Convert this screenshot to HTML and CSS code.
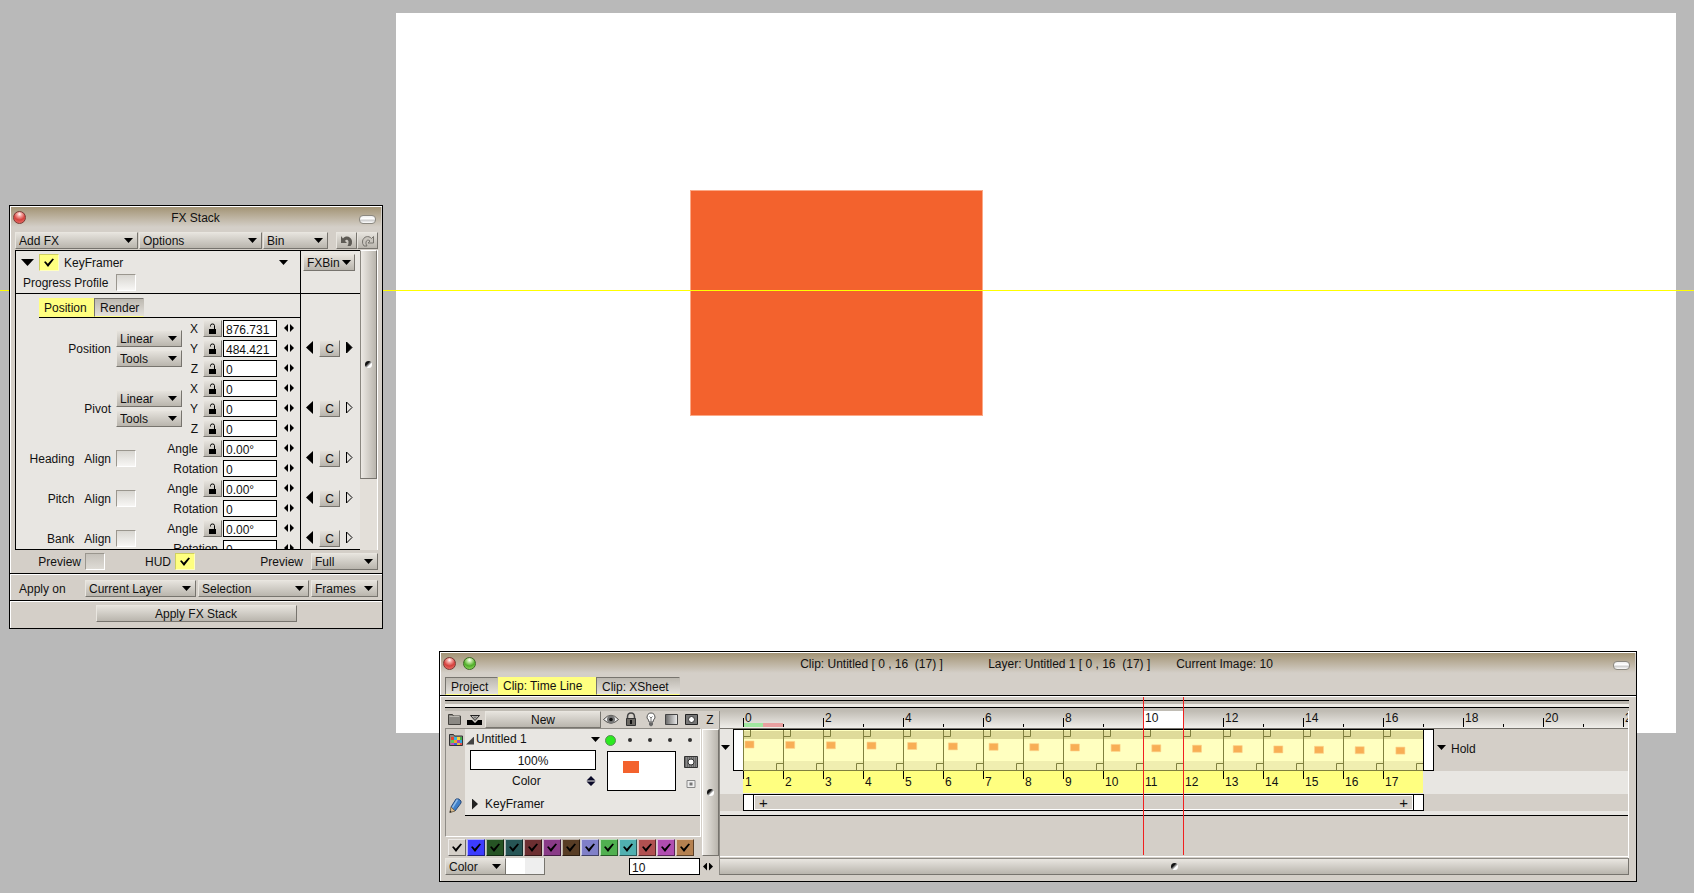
FILE: index.html
```html
<!DOCTYPE html>
<html lang="en">
<head>
<meta charset="utf-8">
<title>Animation workspace</title>
<link rel="stylesheet" href="styles.css">
</head>
<body>
<main class="desktop">
  <div class="sheet"></div>
  <div class="shape"></div>
  <div class="guide"></div>

  <section class="window fx" aria-label="FX Stack">
    <header class="titlebar">
      <button class="orb red" aria-label="Close"></button>
      <h1 class="title">FX Stack</h1>
      <button class="pill" aria-label="Collapse"></button>
    </header>
    <div class="toolbar">
      <span class="drop grow"><select aria-label="Add FX"><option>Add FX</option></select></span>
      <span class="drop grow"><select aria-label="Options"><option>Options</option></select></span>
      <span class="drop bin"><select aria-label="Bin"><option>Bin</option></select></span>
      <span class="history">
        <button class="btn" aria-label="Undo"><svg width="14" height="12" viewBox="0 0 14 12"><path d="M1 1v7h6L5 6C6 4 8 4.500 8.500 6.500Q8.800 9 7.500 11h3Q12.500 9 12 6C11 1.500 6 0 3 3.500z" fill="#5e5b55"/></svg></button>
        <button class="btn" aria-label="Redo"><svg width="14" height="12" viewBox="0 0 14 12"><path d="M12.500 1.500v6.500H7l2-2C7.500 4.500 5.500 5 5 7q-.5 2 1 4H3Q1 8.500 1.500 6C2.500 1.500 7.500 0 10.500 3.500z" fill="#c9c5be" stroke="#77746e"/></svg></button>
      </span>
    </div>

    <div class="stack">
      <div class="stack-main">
        <div class="fx-head">
          <div class="line">
            <button class="arrow big" aria-label="Fold KeyFramer"></button>
            <input type="checkbox" class="tick" id="kf" checked>
            <label for="kf" class="kf-name">KeyFramer</label>
            <button class="arrow" aria-label="KeyFramer menu"></button>
          </div>
          <div class="line">
            <label for="pp" class="pp">Progress Profile</label>
            <input type="checkbox" class="tick" id="pp">
          </div>
        </div>
        <div class="tabs inner-tabs">
          <button class="tab on">Position</button><button class="tab">Render</button>
        </div>
        <div id="params"></div>
      </div>
      <div class="stack-nav">
        <div class="nav-head"><span class="drop fxbin"><select aria-label="FXBin"><option>FXBin</option></select></span></div>
        <div id="navs"></div>
      </div>
      <div class="vscroll"><div class="thumb"><i class="dot"></i></div></div>
    </div>

    <div class="foot preview-row">
      <label for="pv">Preview</label><input type="checkbox" class="tick" id="pv">
      <label for="hud" class="hud">HUD</label><input type="checkbox" class="tick" id="hud" checked>
      <label for="full" class="quality">Preview</label>
      <span class="drop w67"><select id="full"><option>Full</option></select></span>
    </div>
    <div class="foot apply-row">
      <label for="layer" class="apply-label">Apply on</label>
      <span class="drop grow"><select id="layer"><option>Current Layer</option></select></span>
      <span class="drop grow"><select aria-label="Range"><option>Selection</option></select></span>
      <span class="drop w67"><select aria-label="Unit"><option>Frames</option></select></span>
    </div>
    <div class="foot last"><button class="btn text apply">Apply FX Stack</button></div>
  </section>

  <section class="window timeline" aria-label="Timeline">
    <header class="titlebar">
      <button class="orb red" aria-label="Close"></button>
      <button class="orb green" aria-label="Zoom"></button>
      <h2 class="title"><span class="t-part">Clip: Untitled [ 0 , 16&nbsp; (17) ]</span><span class="t-part">Layer: Untitled 1 [ 0 , 16&nbsp; (17) ]</span><span>Current Image: 10</span></h2>
      <button class="pill" aria-label="Collapse"></button>
    </header>
    <nav class="tabs main-tabs">
      <button class="tab project">Project</button><button class="tab on line-tab">Clip: Time Line</button><button class="tab sheet-tab">Clip: XSheet</button>
    </nav>
    <div class="splitter"></div>

    <div class="board">
      <div class="layers">
        <div class="layer-tools">
          <button class="icon" aria-label="Folder"><svg width="20" height="17" viewBox="0 0 20 17"><path d="M3.500 13.500v-10h4l1 1.500h7v8.500z" fill="#8b8984" stroke="#44423e"/><path d="M4.500 5.500h10" stroke="#bbb8b2"/></svg></button>
          <button class="icon" aria-label="Collapse layers"><svg width="20" height="17" viewBox="0 0 20 17"><path d="M5.500 4.500h9L10 9.500z" fill="#d4cfc8" stroke="#222"/><path d="M7.500 5.500h5L10 8z" fill="#777"/><path d="M2 9h5l3 3 3-3h4v5H2z" fill="#000"/></svg></button>
          <button class="btn text new">New</button>
          <button class="icon" aria-label="Visibility"><svg width="20" height="17" viewBox="0 0 20 17"><path d="M2.500 8.500Q10 0 17.500 8.500Q10 16 2.500 8.500z" fill="#eee" stroke="#4e4c48"/><circle cx="10" cy="8.500" r="4" fill="#777"/><circle cx="10" cy="8.500" r="1.800" fill="#111"/></svg></button>
          <button class="icon" aria-label="Lock"><svg width="20" height="17" viewBox="0 0 20 17"><path d="M6.500 8V6q0-4 3.500-4t3.500 4v2" fill="none" stroke="#444" stroke-width="1.500"/><path d="M5.500 7.500h9v7h-9z" fill="#6c6964" stroke="#333"/><path d="M10 9v4" stroke="#111" stroke-width="2"/></svg></button>
          <button class="icon" aria-label="Light table"><svg width="20" height="17" viewBox="0 0 20 17"><path d="M8 11q0-2-2-4 0-5 4-5t4 5q-2 2-2 4z" fill="#fff" stroke="#555"/><path d="M10 11V7L8.500 5.500M10 7l1.500-1.500" stroke="#777" fill="none"/><path d="M8 11.500h4v2.500l-2 1.500-2-1.500z" fill="#666"/></svg></button>
          <button class="icon" aria-label="Blend"><svg width="20" height="17" viewBox="0 0 20 17"><defs><linearGradient id="gr"><stop stop-color="#666"/><stop offset="1" stop-color="#eee"/></linearGradient></defs><path d="M4.500 3.500h12v10h-12z" fill="url(#gr)" stroke="#444"/></svg></button>
          <button class="icon" aria-label="Stencil"><svg width="20" height="17" viewBox="0 0 20 17"><path d="M4.500 3.500h12v10h-12z" fill="#777" stroke="#222"/><circle cx="10.500" cy="8.500" r="3" fill="#fff" stroke="#333"/></svg></button>
        </div>
        <div class="layer-panel">
          <div class="gutter">
            <svg width="20" height="20" viewBox="0 0 20 20"><path d="M3.500 16.500V5.500h4l1 1.500h8v9.500z" fill="#8b8984" stroke="#333"/><path d="M5 8h3v3H5z" fill="#e5432e"/><path d="M8 8h3v3H8z" fill="#35b6e0"/><path d="M11 8h3v3h-3z" fill="#f3d13a"/><path d="M14 8h2v3h-2z" fill="#44b04b"/><path d="M5 11h3v3H5z" fill="#5bc85b"/><path d="M8 11h3v3H8z" fill="#f59b2d"/><path d="M11 11h3v3h-3z" fill="#9b45c1"/><path d="M14 11h2v3h-2z" fill="#33a3d8"/><path d="M5 14h3v2H5z" fill="#c14ac1"/><path d="M8 14h3v2H8z" fill="#3a67d9"/><path d="M11 14h3v2h-3z" fill="#e0c040"/><path d="M14 14h2v2h-2z" fill="#e05050"/></svg>
            <svg width="20" height="20" viewBox="0 0 20 20"><path d="M5 11l5-8q3-1 5 2v2l-6 8z" fill="#3f7fc8" stroke="#2b4b78"/><path d="M11.500 3.500L6.500 11.500" stroke="#8fbce8" stroke-width="1.500"/><path d="M5 11l4 4-5 1.500z" fill="#dcbb8c" stroke="#776b55"/><path d="M4 14.500l1.500 1.500-2 .8z" fill="#222"/></svg>
          </div>
          <div class="layer-body">
            <div class="layer-left">
              <div class="lname"><i class="fold"></i><span>Untitled 1</span><button class="arrow" aria-label="Layer menu"></button></div>
              <input type="text" class="opacity" value="100%" aria-label="Opacity">
              <div class="lmode"><span>Color</span><svg width="10" height="10" viewBox="0 0 10 10"><path d="M5 0l4.500 4.500h-9zM5 10L.5 5.500h9z" fill="#0a0a28"/></svg></div>
            </div>
            <div class="layer-right">
              <div class="flags"><i class="green-dot"></i><i class="pt"></i><i class="pt"></i><i class="pt"></i><i class="pt"></i></div>
              <div class="thumb-row">
                <div class="preview"><i></i></div>
                <div class="masks">
                  <svg width="14" height="12" viewBox="0 0 14 12"><path d="M.5.500h13v11H.500z" fill="#888" stroke="#333"/><path d="M1 2h12M1 4h12M1 6h12M1 8h12M1 10h12" stroke="#444" stroke-dasharray="1 1"/><circle cx="7" cy="6" r="3" fill="#fff" stroke="#333"/></svg>
                  <svg width="10" height="8" viewBox="0 0 10 8"><path d="M1 .5h8v7H1z" fill="#eee" stroke="#888"/><path d="M3.500 2.500h3v3h-3z" fill="#777"/></svg>
                </div>
              </div>
            </div>
            <div class="kf-row"><i class="play"></i><span>KeyFramer</span></div>
          </div>
        </div>
        <div class="colors" id="colors"></div>
      </div>

      <div class="zcol">
        <button class="icon z">Z</button>
        <div class="zthumb"><i class="dot"></i></div>
      </div>

      <div class="tracks">
        <div class="ruler" id="ruler"></div>
        <div class="track">
          <div class="track-gutter"><i class="arrow"></i></div>
          <div class="handle"></div>
          <div class="film" id="film"></div>
          <div class="handle end"></div>
          <span class="hold"><button class="arrow" aria-label="Post behaviour"></button><span>Hold</span></span>
        </div>
        <div class="keys"><div class="keybar"><i class="grip"></i><span class="bar"><span>+</span><span>+</span></span><i class="grip"></i></div></div>
        <div class="empty"></div>
        <div class="playhead"></div>
      </div>
    </div>

    <div class="bottom">
      <span class="drop cdrop"><select aria-label="Colour group"><option>Color</option></select></span>
      <span class="swatches"><i></i><i></i></span>
      <input type="text" class="field frame-no" value="10" aria-label="Current image">
      <span class="spin"></span>
      <div class="hscroll"><i class="dot"></i></div>
    </div>
  </section>
</main>
<script src="script.js"></script>
</body>
</html>
```
FILE: script.js
```js
const LOCK = '<svg width="9" height="12" viewBox="0 0 9 12"><path d="M1 6h7v5H1z" fill="#000"/><path d="M2.500 3.500V2.500q0-1.500 2-1.500t2 1.500V6" fill="none" stroke="#000"/></svg>';
const groups = [
  { name: 'Position', rows: [['X', '876.731'], ['Y', '484.421'], ['Z', '0']], key: true },
  { name: 'Pivot', rows: [['X', '0'], ['Y', '0'], ['Z', '0']] },
  { name: 'Heading', rows: [['Angle', '0.00°'], ['Rotation', '0']] },
  { name: 'Pitch', rows: [['Angle', '0.00°'], ['Rotation', '0']] },
  { name: 'Bank', rows: [['Angle', '0.00°'], ['Rotation', '0']] }
];

const drop = (text, name) => `<span class="drop"><select aria-label="${name} ${text}"><option>${text}</option></select></span>`;

document.getElementById('params').innerHTML = groups.map(g => {
  const axes = g.rows.length === 3;
  const id = g.name.toLowerCase();
  const head = axes
    ? `<span class="pname">${g.name}</span><div class="pctl wide">${drop('Linear', g.name)}${drop('Tools', g.name)}</div>`
    : `<span class="pname"><span>${g.name}</span><label for="${id}-al">Align</label></span><div class="pctl"><input type="checkbox" class="tick" id="${id}-al"></div>`;
  const rows = g.rows.map(([label, value]) => {
    const fid = `${id}-${label}`;
    const lock = label === 'Rotation' ? '' : `<button class="btn lock" aria-label="Lock ${label}">${LOCK}</button>`;
    return `<div class="prow"><label for="${fid}">${label}</label>${lock}<input type="text" class="field" id="${fid}" value="${value}"><span class="spin"></span></div>`;
  }).join('');
  return `<div class="param ${axes ? 'tall' : ''}">${head}<div class="prows">${rows}</div></div>`;
}).join('');

document.getElementById('navs').innerHTML = groups.map(g =>
  `<div class="nav ${g.rows.length === 3 ? 'tall' : ''}">
    <svg width="8" height="13" viewBox="0 0 8 13"><path d="M7 0v13L0 6.500z"/></svg>
    <button class="btn text c">C</button>
    <svg width="8" height="13" viewBox="0 0 8 13"><path d="M1.500 1v11l5.500-5.500z" fill="${g.key ? '#000' : 'none'}" stroke="#000"/></svg>
  </div>`).join('');

const colors = ['#d4cfc8', '#3c3cff', '#265424', '#275656', '#6d2f32', '#8a3b88', '#583d25', '#8080c8', '#50b050', '#50b0b0', '#b05050', '#b04db0', '#b58150'];
document.getElementById('colors').innerHTML = colors.map((c, i) =>
  `<input type="checkbox" class="tick chip" checked aria-label="Colour group ${i + 1}" style="background:${c}">`).join('');

let ruler = '';
for (let i = 0; i <= 22; i++) {
  ruler += `<span class="mark ${i % 2 ? 'odd' : ''} ${i === 10 ? 'current' : ''} ${i === 0 ? 'first' : ''}">${i % 2 ? '' : i}</span>`;
}
document.getElementById('ruler').innerHTML = ruler;

let film = '';
for (let i = 0; i < 17; i++) {
  const x = (2 + i * 0.68).toFixed(1);
  const y = (12 + i * 0.38).toFixed(1);
  film += `<div class="cell"><svg width="40" height="42" viewBox="0 0 40 42">
    <path d="M0 0h40v42H0z" fill="#ffffc0"/><path d="M0 2h40v8H0z" fill="#dfdb9a"/><path d="M0 32h40v10H0z" fill="#f0eeb0"/>
    <path d="M${x} ${y}h9v7h-9z" fill="#f8ae55" stroke="#fcd28a" stroke-width=".6"/>
    <path d="M.5 0v42M0 41.500h40M.5 7.500h7V1M33.500 41v-6.500H40" fill="none" stroke="#80803f"/>
    <path d="M0 .5h40" stroke="#000"/></svg><span>${i + 1}</span></div>`;
}
document.getElementById('film').innerHTML = film;
```
FILE: styles.css
```css
* { box-sizing: border-box; }
body { margin: 0; background: #b9b9b9; color: #111; font: 12px/19px "Liberation Sans", Arial, sans-serif; }
button, input, select { font: inherit; color: inherit; margin: 0; padding: 0; border: 0; border-radius: 0; background: none; appearance: none; outline: 0; }
svg { display: block; }
.grow { flex: 1; }

.desktop { position: relative; min-height: 100vh; overflow: hidden; }
.sheet { position: absolute; left: 396px; right: 18px; top: 13px; height: 720px; background: #fff; }
.shape { position: absolute; left: 690px; top: 190px; width: 293px; height: 226px; background: #f3622d; border: 1px solid #fba987; }
.guide { position: absolute; left: 0; right: 0; top: 290px; height: 1px; background: #ff0; }

.window { position: absolute; border: 1px solid #000; background: #d4cfc8; box-shadow: inset 1px 1px #fff; }
.fx { left: 9px; top: 205px; width: 374px; }
.timeline { left: 439px; right: 57px; top: 651px; padding-bottom: 6px; }

.titlebar { display: flex; align-items: flex-start; gap: 7px; margin: 1px 1px 0; height: 25px; padding: 3px 5px 0 2px; background: linear-gradient(#a39475, #d4cfc8 20px); }
.timeline .titlebar { height: 24px; }
.title { flex: 1; margin: 0; padding-left: 6px; font-size: 12px; line-height: 17px; font-weight: 400; text-align: center; }
.timeline .title { display: flex; justify-content: center; padding: 0 16px 0 0; }
.t-part { width: 188px; text-align: left; }
.orb { width: 13px; height: 13px; margin-top: 1px; border-radius: 50%; border: 1px solid #7a3a35; }
.orb.red { background: radial-gradient(circle at 50% 20%, #fff 0, #f7aaa5 20%, #d5403c 55%, #f08078 100%); }
.orb.green { border-color: #3c6b25; background: radial-gradient(circle at 50% 20%, #fff 0, #c0e8a0 20%, #4fae28 55%, #a5e570 100%); }
.pill { width: 17px; height: 9px; margin-top: 5px; border: 1px solid #8b8880; border-radius: 4px; background: linear-gradient(#eee, #fff 40%, #ccc 60%, #fff); }

.btn, .drop { background: linear-gradient(#e6e3dd, #b9b5ad); border: 1px solid; border-color: #e9e6e0 #77746e #77746e #e9e6e0; height: 17px; }
.btn { display: flex; align-items: center; justify-content: center; line-height: 13px; }
.btn.text { padding-top: 2px; }
.drop { display: flex; position: relative; }
.drop select { flex: 1; min-width: 0; height: 15px; line-height: 13px; padding: 2px 0 0 3px; }
.drop::after { content: ""; position: absolute; right: 4px; top: 5px; width: 9px; height: 5px; background: #000; clip-path: polygon(0 0, 100% 0, 50% 100%); pointer-events: none; }
.arrow { flex: none; width: 9px; height: 5px; background: #000; clip-path: polygon(0 0, 100% 0, 50% 100%); }
.arrow.big { width: 13px; height: 7px; }
.w67 { width: 67px; }

.tick { display: flex; align-items: center; justify-content: center; width: 20px; height: 17px; border: 1px solid; border-color: #9a968e #fff #fff #9a968e; background: linear-gradient(#d8d6d1, #f7f6f4); }
.tick:checked { background: #ffff80; border-color: #cfcf60 #ffffc0 #ffffc0 #cfcf60; }
.tick:checked::before { content: ""; width: 10px; height: 9px; background: #000; clip-path: polygon(0 45%, 15% 35%, 38% 65%, 85% 5%, 100% 15%, 40% 100%); }
.field { height: 17px; width: 54px; padding: 2px 2px 0; border: 1px solid #000; background: #fff; line-height: 13px; }
.spin { width: 10px; height: 8px; background: #000; clip-path: polygon(0 50%, 40% 0, 40% 100%, 0 50%, 60% 50%, 60% 0, 100% 50%, 60% 100%, 60% 50%); }
.dot { width: 7px; height: 7px; border-radius: 50%; background: linear-gradient(135deg, #111 35%, #888 50%, #fff 65%); }

.toolbar { display: flex; padding: 0 4px 0 5px; gap: 1px; }
.bin { width: 65px; }
.history { display: flex; margin-left: 7px; }
.history .btn { width: 21px; }

.stack { display: flex; height: 300px; margin: 1px 4px 0 5px; overflow: hidden; }
.stack-main, .stack-nav { background: #e8e6e2; border: 1px solid #000; overflow: hidden; }
.stack-main { flex: 1; }
.stack-nav { width: 59px; border-left: 0; border-right: 0; }
.fx-head, .nav-head { height: 43px; border-bottom: 1px solid #000; padding-top: 3px; }
.nav-head { padding-left: 2px; }
.fxbin { width: 52px; }
.fxbin::after { right: 3px; }
.line { display: flex; align-items: center; height: 20px; padding: 0 12px 3px 5px; }
.line label { padding-top: 2px; }
.kf-name { flex: 1; margin-left: 5px; }
.line .big { margin-right: 5px; }
.pp { width: 95px; padding-left: 2px; }

.tabs { display: flex; height: 18px; }
.tab { height: 18px; padding: 2px 0 0 5px; line-height: 15px; text-align: left; border: 1px solid; border-color: #77746e transparent #ff8 #77746e; background: linear-gradient(#bcb8b0, #e4e1dc); }
.tab.on { padding: 1px 0 0 4px; background: #ffff80; border-color: #ffff80; }
.inner-tabs { margin: 4px 0 2px 23px; height: 20px; border-bottom: 1px solid #000; }
.inner-tabs .tab { width: 50px; height: 19px; }
.inner-tabs .tab.on { width: 55px; }
.project { width: 53px; }
.line-tab { width: 98px; }
.sheet-tab { width: 84px; }

.param { display: flex; height: 40px; }
.param.tall { height: 60px; }
.pname { width: 100px; padding: 10px 5px 0 0; display: flex; justify-content: flex-end; gap: 10px; }
.tall .pname { padding-top: 20px; }
.pctl { width: 20px; padding-top: 10px; }
.pctl.wide { width: 66px; display: grid; align-content: start; gap: 3px; }
.prows { flex: 1; }
.prow { display: flex; height: 20px; align-items: flex-start; }
.prow label { flex: 1; text-align: right; padding-right: 5px; }
.lock { width: 19px; margin-right: 1px; }
.prow .spin { margin: 4px 6px 0 7px; }
#navs { padding-top: 26px; }
.nav { height: 40px; padding: 10px 0 0 5px; display: flex; gap: 5px; align-items: flex-start; }
.nav.tall { height: 60px; padding-top: 20px; }
.nav svg { margin-top: 1px; }
.c { width: 21px; }
.vscroll { width: 18px; background: #e3dfd9; border-right: 1px solid #fff; }
.thumb { height: 229px; width: 17px; display: flex; align-items: center; justify-content: center; border: 1px solid; border-color: #fff #77746e #77746e #8a8780; background: linear-gradient(90deg, #ece9e4, #b9b5ad); }

.foot { display: flex; padding: 3px 4px 0 5px; height: 24px; border-bottom: 1px solid #000; box-shadow: 0 1px #fff; }
.preview-row label { margin-right: 4px; }
.preview-row label:first-child { width: 66px; text-align: right; }
.preview-row .tick:not(:checked) { background: linear-gradient(#c5c1ba, #dedbd5); }
.preview-row .hud { width: 66px; text-align: right; }
.preview-row .quality { flex: 1; text-align: right; margin-right: 8px; }
.apply-row { height: 27px; padding-top: 6px; gap: 2px; }
.apply-label { width: 68px; padding-left: 4px; }
.last { height: 27px; padding: 4px 0 0; justify-content: center; border: 0; box-shadow: none; }
.apply { width: 201px; }

.main-tabs { padding-left: 5px; height: 19px; border-bottom: 1px solid #000; box-shadow: 0 1px #fff; }
.splitter { height: 15px; margin: 0 7px 0 5px; background: linear-gradient(transparent 4px, #000 4px 5px, #bcb8b0 5px 8px, #eeebe6 8px 11px, #000 11px 12px, #c0bcb4 12px); }

.board { display: flex; margin: 0 7px 0 5px; height: 147px; }
.layers { width: 256px; }
.layer-tools { display: flex; height: 17px; }
.icon { width: 20px; height: 17px; }
.new { width: 116px; }
.layer-panel { display: flex; height: 109px; border: 1px solid; border-color: #8f8c86 #fff #fff #8f8c86; }
.gutter { width: 19px; display: flex; flex-direction: column; gap: 47px; }
.layer-body { flex: 1; height: 87px; display: grid; grid-template-columns: 1fr 100px; grid-template-rows: 64px 22px; background: #e8e6e2; border-bottom: 1px solid #000; }
.layer-left { padding-left: 5px; }
.lname { display: flex; align-items: center; height: 21px; }
.lname span { flex: 1; }
.fold { flex: none; width: 8px; height: 8px; margin: 2px 2px 0 -4px; background: #444; clip-path: polygon(100% 0, 100% 100%, 0 100%); }
.opacity { display: block; width: 126px; height: 20px; padding-top: 2px; line-height: 16px; border: 1px solid #000; background: #fff; text-align: center; }
.lmode { display: flex; align-items: center; height: 22px; padding: 0 4px 0 42px; justify-content: space-between; }
.flags { display: flex; height: 22px; align-items: center; }
.flags i { flex: none; }
.green-dot { width: 11px; height: 11px; margin: 0 12px 0 5px; border-radius: 50%; background: #2bea20; border: 1px solid #5a8a58; }
.pt { width: 4px; height: 4px; margin-right: 16px; border-radius: 50%; background: #333; }
.flags .pt:last-child { margin-right: 0; }
.thumb-row { display: flex; padding-left: 7px; }
.preview { width: 69px; height: 40px; border: 1px solid #000; background: #fff; padding: 9px 15px; }
.preview i { display: block; width: 16px; height: 12px; background: #f3622d; }
.masks { display: grid; justify-items: center; align-content: start; gap: 12px; padding: 5px 0 0 8px; }
.kf-row { grid-column: 1 / 3; display: flex; align-items: center; gap: 7px; padding-left: 7px; }
.play { width: 6px; height: 11px; background: #222; clip-path: polygon(0 0, 100% 50%, 0 100%); }
.colors { display: flex; gap: 1px; padding: 2px 0 0 3px; }
.chip, .chip:checked { width: 18px; border-color: #ffffff99 #00000080 #00000080 #ffffff99; }

.zcol { width: 17px; margin-left: 1px; }
.z { width: 16px; display: block; text-align: center; }
.zthumb { height: 127px; margin-top: 1px; display: flex; align-items: center; justify-content: center; border: 1px solid; border-color: #fff #77746e #77746e #fff; background: linear-gradient(90deg, #ece9e4, #b9b5ad); }

.tracks { flex: 1; min-width: 0; position: relative; border-left: 1px solid #8f8c86; border-right: 1px solid #fff; }
.ruler { display: flex; height: 18px; overflow: hidden; padding-left: 23px; border-bottom: 1px solid #77746e; background: linear-gradient(#c0bcb4, #f0eeea); }
.mark { flex: none; width: 40px; padding-left: 2px; line-height: 14px; background: linear-gradient(#000, #000) 0 7px / 1px 9px no-repeat; }
.mark.odd { background-position: 0 13px; background-size: 1px 3px; }
.mark.first { background: linear-gradient(#000, #000) 0 7px / 1px 9px no-repeat, linear-gradient(90deg, #a0e8a0 20px, #e8a0a0 20px) 0 12px / 40px 4px no-repeat; }
.mark.current { background-color: #fff; }
.track { display: flex; height: 65px; background: linear-gradient(#d4cfc8 42px, #e8e6e2 42px); }
.track-gutter { width: 13px; padding: 16px 0 0 1px; background: #e8e6e2; }
.track-gutter .arrow { display: block; }
.handle { width: 10px; height: 42px; background: #fff; border: 1px solid #000; border-right: 0; }
.handle.end { border-right: 1px solid #000; width: 11px; }
.film { display: flex; }
.cell { width: 40px; height: 64px; background: #ffff80; }
.cell span { display: block; height: 22px; padding: 2px 0 0 2px; background: linear-gradient(#000, #000) 0 0 / 1px 8px no-repeat; }
.hold { display: flex; gap: 5px; padding: 11px 0 0 3px; }
.hold .arrow { margin-top: 5px; }
.keys { height: 22px; padding-left: 23px; border-bottom: 1px solid #000; background: linear-gradient(#d4cfc8 17px, #e8e6e2 17px); }
.keybar { display: flex; width: 681px; height: 17px; border: 1px solid #000; }
.grip { width: 9px; background: #fff; }
.bar { flex: 1; display: flex; justify-content: space-between; padding: 0 5px; line-height: 15px; border: 1px solid #000; border-width: 0 1px; box-shadow: inset 1px 1px #fff, inset -1px -1px #fff; }
.bar span { font-size: 15px; }
.empty { height: 41px; border-bottom: 1px solid #fff; }
.playhead { position: absolute; left: 423px; top: -14px; width: 41px; bottom: 3px; border: 1px solid #f02020; border-width: 0 1px; }

.bottom { display: flex; align-items: center; margin: 0 7px 0 5px; height: 17px; }
.cdrop { width: 61px; }
.swatches { display: flex; height: 17px; border: 1px solid #77746e; border-width: 0 1px 1px 0; }
.swatches i { width: 19px; background: #fff; }
.swatches i + i { background: #eee; }
.frame-no { width: 71px; margin-left: auto; }
.bottom .spin { margin: 0 6px 0 3px; }
.hscroll { width: calc(100% - 274px); height: 17px; display: flex; align-items: center; justify-content: center; border: 1px solid; border-color: #8f8c86 #77746e #77746e #8f8c86; background: linear-gradient(#e9e6e1, #b9b5ad); }
```
